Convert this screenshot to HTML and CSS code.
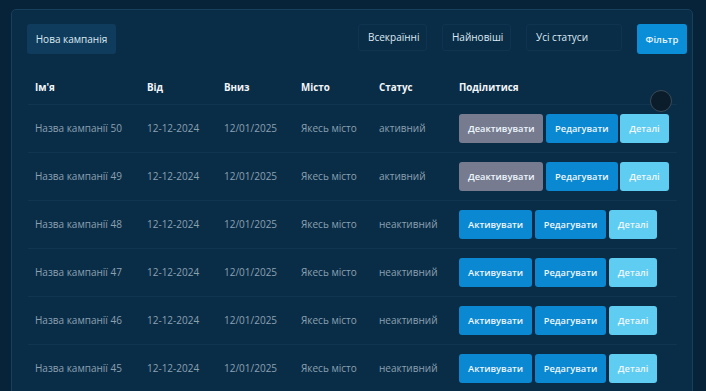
FILE: index.html
```html
<!DOCTYPE html>
<html lang="uk">
<head>
    <meta charset="UTF-8">
    <meta name="viewport" content="width=device-width, initial-scale=1.0">
    <title>Кампанії</title>
    <link rel="stylesheet" href="styles.css">
</head>
<body>
    <div class="panel">
        <div class="toolbar">
            <button class="btn-new">Нова кампанія</button>
            <div class="filters">
                <div class="select w-country">Всекраїнні</div>
                <div class="select w-sort">Найновіші</div>
                <div class="select w-status">Усі статуси</div>
                <button class="btn-filter">Фільтр</button>
            </div>
        </div>

        <table class="campaigns">
            <thead>
                <tr>
                    <th class="c-name">Ім'я</th>
                    <th class="c-from">Від</th>
                    <th class="c-to">Вниз</th>
                    <th class="c-city">Місто</th>
                    <th class="c-status">Статус</th>
                    <th>Поділитися</th>
                </tr>
            </thead>
            <tbody>
                <tr>
                    <td>Назва кампанії 50</td>
                    <td>12-12-2024</td>
                    <td>12/01/2025</td>
                    <td>Якесь місто</td>
                    <td>активний</td>
                    <td class="actions">
                        <button class="btn grey">Деактивувати</button>
                        <button class="btn blue">Редагувати</button>
                        <button class="btn light">Деталі</button>
                    </td>
                </tr>
                <tr>
                    <td>Назва кампанії 49</td>
                    <td>12-12-2024</td>
                    <td>12/01/2025</td>
                    <td>Якесь місто</td>
                    <td>активний</td>
                    <td class="actions">
                        <button class="btn grey">Деактивувати</button>
                        <button class="btn blue">Редагувати</button>
                        <button class="btn light">Деталі</button>
                    </td>
                </tr>
                <tr>
                    <td>Назва кампанії 48</td>
                    <td>12-12-2024</td>
                    <td>12/01/2025</td>
                    <td>Якесь місто</td>
                    <td>неактивний</td>
                    <td class="actions">
                        <button class="btn blue">Активувати</button>
                        <button class="btn blue">Редагувати</button>
                        <button class="btn light">Деталі</button>
                    </td>
                </tr>
                <tr>
                    <td>Назва кампанії 47</td>
                    <td>12-12-2024</td>
                    <td>12/01/2025</td>
                    <td>Якесь місто</td>
                    <td>неактивний</td>
                    <td class="actions">
                        <button class="btn blue">Активувати</button>
                        <button class="btn blue">Редагувати</button>
                        <button class="btn light">Деталі</button>
                    </td>
                </tr>
                <tr>
                    <td>Назва кампанії 46</td>
                    <td>12-12-2024</td>
                    <td>12/01/2025</td>
                    <td>Якесь місто</td>
                    <td>неактивний</td>
                    <td class="actions">
                        <button class="btn blue">Активувати</button>
                        <button class="btn blue">Редагувати</button>
                        <button class="btn light">Деталі</button>
                    </td>
                </tr>
                <tr>
                    <td>Назва кампанії 45</td>
                    <td>12-12-2024</td>
                    <td>12/01/2025</td>
                    <td>Якесь місто</td>
                    <td>неактивний</td>
                    <td class="actions">
                        <button class="btn blue">Активувати</button>
                        <button class="btn blue">Редагувати</button>
                        <button class="btn light">Деталі</button>
                    </td>
                </tr>
            </tbody>
        </table>

        <div class="avatar"></div>
    </div>
</body>
</html>
```

FILE: styles.css
```css
* { margin: 0; padding: 0; box-sizing: border-box; }

body {
    font-family: "Open Sans", "Noto Sans", sans-serif;
    font-size: 10px;
    background: #072339;
    padding: 9px 13px 0 11px;
    height: 391px;
    overflow: hidden;
}

.panel {
    position: relative;
    background: #0a2d47;
    border: 1px solid #163f5b;
    border-radius: 5px;
    padding: 14px 5px 0 15px;
    min-height: 420px;
}

.toolbar {
    display: flex;
    justify-content: space-between;
    align-items: flex-start;
    margin-bottom: 18px;
}

.btn-new {
    font-family: inherit;
    font-size: 10px;
    color: #dce9f2;
    background: #0f3c5c;
    border: none;
    border-radius: 3px;
    height: 30px;
    width: 89px;
}

.filters { display: flex; gap: 15px; align-items: flex-start; }

.select {
    height: 27px;
    line-height: 25px;
    border: 1px solid #0f344f;
    border-radius: 3px;
    color: #dce9f2;
    font-size: 10px;
    padding: 0 9px;
    white-space: nowrap;
    overflow: hidden;
}

.w-country { width: 69px; }
.w-sort { width: 69px; }
.w-status { width: 96px; }

.btn-filter {
    font-family: inherit;
    font-size: 9.5px;
    font-weight: 600;
    color: #e6f4fc;
    background: #0b8ed8;
    border: none;
    border-radius: 3px;
    height: 30px;
    width: 50px;
}

.campaigns {
    border-collapse: collapse;
    table-layout: fixed;
    width: 649px;
    margin-left: 1px;
}

.campaigns th {
    text-align: left;
    color: #f1f6fa;
    font-weight: 700;
    font-size: 9.8px;
    height: 32px;
    padding: 0 7px;
    border-bottom: 1px solid #0f3550;
}

.c-name { width: 112px; }
.c-from { width: 77px; }
.c-to { width: 77px; }
.c-city { width: 78px; }
.c-status { width: 80px; }

.campaigns td {
    color: #8ba0b1;
    height: 48px;
    padding: 0 7px;
    border-bottom: 1px solid #0f3550;
    white-space: nowrap;
    overflow: visible;
}

.campaigns td.actions { padding: 0 0 0 7px; }

.btn {
    font-family: inherit;
    font-size: 9.3px;
    font-weight: 600;
    color: #eef7fd;
    border: none;
    border-radius: 3px;
    height: 29px;
    padding: 0 9px;
}

.btn.grey { background: #767b90; }
.btn.blue { background: #0a88d1; }
.btn.light { background: #5fcdf1; }

.avatar {
    position: absolute;
    left: 638px;
    top: 80px;
    width: 22px;
    height: 22px;
    border-radius: 50%;
    background: #0b1c2a;
    border: 1px solid #3a4a57;
}
```
